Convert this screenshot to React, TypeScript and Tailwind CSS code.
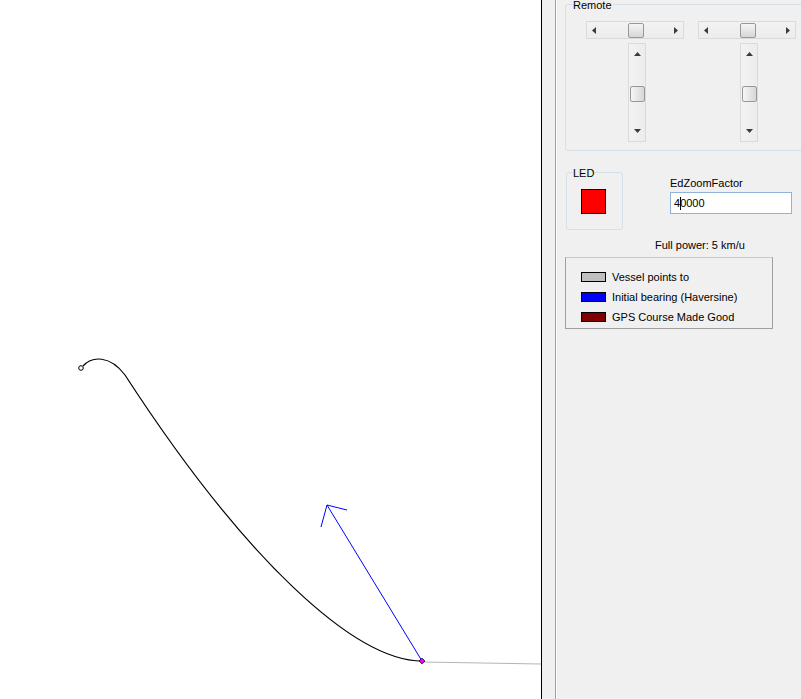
import React from "react";

const Tri = ({ dir }: { dir: "l" | "r" | "u" | "d" }) => {
  const pts = {
    l: "4,0 4,7 0,3.5",
    r: "0,0 0,7 4,3.5",
    u: "0,4 7,4 3.5,0",
    d: "0,0 7,0 3.5,4",
  }[dir];
  const w = dir === "l" || dir === "r" ? 4 : 7;
  const h = dir === "l" || dir === "r" ? 7 : 4;
  return (
    <svg width={w} height={h} viewBox={`0 0 ${w} ${h}`}>
      <polygon points={pts} fill="#3c3c3c" />
    </svg>
  );
};

const HScroll = () => (
  <div className="relative h-[18px] w-[98px] border border-[#dadada] bg-gradient-to-b from-[#f3f3f3] to-[#ececec] flex items-center justify-between px-[5px]">
    <Tri dir="l" />
    <Tri dir="r" />
    <div className="absolute left-[41px] top-[1px] w-[16px] h-[15px] rounded-[2px] border border-[#989898] bg-gradient-to-b from-[#f6f6f6] to-[#d6d6d6]" />
  </div>
);

const VScroll = () => (
  <div className="relative w-[18px] h-[99px] border border-[#dadada] bg-gradient-to-r from-[#f3f3f3] to-[#ececec] flex flex-col items-center justify-between py-[8px]">
    <Tri dir="u" />
    <Tri dir="d" />
    <div className="absolute top-[42px] left-[1px] w-[15px] h-[16px] rounded-[2px] border border-[#989898] bg-gradient-to-r from-[#f6f6f6] to-[#d6d6d6]" />
  </div>
);

const ScrollPair = () => (
  <div className="flex flex-col w-[98px] shrink-0">
    <HScroll />
    <div className="mt-[4px] ml-[42px]">
      <VScroll />
    </div>
  </div>
);

const Legend = ({ color, label }: { color: string; label: string }) => (
  <div className="flex items-center h-[20px] gap-[6px]">
    <div className={`w-[25px] h-[10px] border border-black ${color}`} />
    <span>{label}</span>
  </div>
);

const Canvas = () => (
  <div className="w-[542px] h-full shrink-0 bg-white border-r border-black">
    <svg width="541" height="699" viewBox="0 0 541 699">
      <path
        d="M83,366 C92,356 110,355 125,375 C245,560 355,661 422,661"
        fill="none"
        stroke="#000"
        strokeWidth="1.2"
      />
      <circle cx="81" cy="368" r="2.3" fill="#fff" stroke="#000" strokeWidth="1" />
      <line x1="422" y1="662" x2="541" y2="664" stroke="#b4b4b4" strokeWidth="1" />
      <g stroke="#0000ff" strokeWidth="1" fill="none">
        <line x1="422" y1="661" x2="327" y2="505" />
        <line x1="327" y1="505" x2="347" y2="510" />
        <line x1="327" y1="505" x2="321" y2="527" />
      </g>
      <rect x="420" y="659" width="4" height="4" fill="#ff00ff" stroke="#000" strokeWidth="0.8" transform="rotate(45 422 661)" />
    </svg>
  </div>
);

export default function App() {
  return (
    <div className="flex w-[801px] h-[699px] overflow-hidden font-['Liberation_Sans',Arial,sans-serif] text-[11px] leading-[13px] text-black">
      <Canvas />
      <div className="w-[14px] h-full shrink-0 bg-[#f0f0f0] border-r border-[#a0a0a0]" />
      <div className="flex-1 min-w-0 h-full overflow-hidden bg-[#f0f0f0] border-l border-white pl-[8px]">
        <div className="relative mt-[4px] w-[240px] h-[147px] border border-[#d5dfe5] rounded-[3px]">
          <span className="absolute left-[6px] top-[-6px] px-[1px] bg-[#f0f0f0]">Remote</span>
          <div className="flex gap-[14px] pt-[16px] pl-[20px]">
            <ScrollPair />
            <ScrollPair />
          </div>
        </div>

        <div className="flex mt-[21px]">
          <div className="relative shrink-0 ml-[1px] w-[57px] h-[58px] border border-[#d5dfe5] rounded-[3px]">
            <span className="absolute left-[5px] top-[-6px] px-[1px] bg-[#f0f0f0]">LED</span>
            <div className="mt-[16px] ml-[14px] w-[25px] h-[25px] bg-[#ff0000] border border-black" />
          </div>
          <div className="ml-[47px] flex flex-col">
            <span className="mt-[5px]">EdZoomFactor</span>
            <div className="mt-[2px] w-[122px] h-[22px] bg-white border border-[#8fb3da] flex items-center pl-[3px]">
              <span>4</span>
              <span className="inline-block w-px h-[13px] bg-black -mr-px" />
              <span>0000</span>
            </div>
          </div>
        </div>

        <div className="mt-[9px] ml-[90px]">Full power: 5 km/u</div>

        <div className="mt-[5px] w-[208px] h-[72px] border border-[#a0a0a0] border-t-[#c8c8c8] pt-[9px] pl-[15px]">
          <Legend color="bg-[#c0c0c0]" label="Vessel points to" />
          <Legend color="bg-[#0000ff]" label="Initial bearing (Haversine)" />
          <Legend color="bg-[#800000]" label="GPS Course Made Good" />
        </div>
      </div>
    </div>
  );
}
